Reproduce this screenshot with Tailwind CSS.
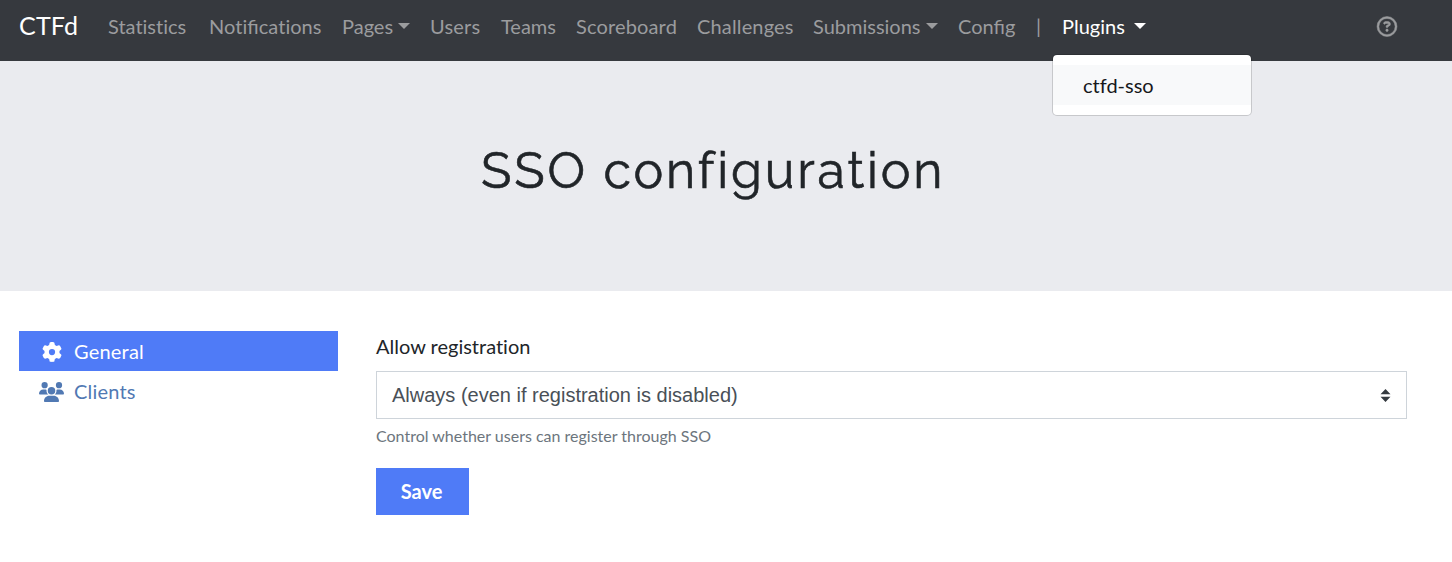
<!DOCTYPE html>
<html lang="en">
<head>
<meta charset="utf-8">
<title>SSO configuration</title>
<script src="https://cdn.jsdelivr.net/npm/@tailwindcss/browser@4"></script>
</head>
<body class="bg-white font-[Lato,sans-serif] text-xl leading-[30px] text-[#212529]">
<nav class="flex h-[61px] items-start bg-[#36393e] pl-[19px] pr-[55px] pt-2.5 text-[#9b9c9e]">
  <a class="w-[79px] text-[25px] tracking-[0.2px] text-white">CTFd</a>
  <ul class="flex h-8 items-center whitespace-nowrap">
    <li class="w-[101px] pl-2.5 [font-variant-ligatures:none]">Statistics</li>
    <li class="w-[133px] pl-2.5">No<span class="[font-variant-ligatures:none]">t</span>ifica<span class="[font-variant-ligatures:none]">t</span>ions</li>
    <li class="flex w-[88px] items-center gap-[5px] pl-2.5">Pages<span class="border-x-6 border-t-6 border-x-transparent border-t-current"></span></li>
    <li class="w-[71px] pl-2.5 tracking-[0.2px]">Users</li>
    <li class="w-[75px] pl-2.5">Teams</li>
    <li class="w-[121px] pl-2.5 tracking-[0.15px]">Scoreboard</li>
    <li class="w-[116px] pl-2.5 tracking-[0.15px]">Challenges</li>
    <li class="flex w-[145px] items-center gap-[5px] pl-2.5">Submissions<span class="border-x-6 border-t-6 border-x-transparent border-t-current"></span></li>
    <li class="w-[78px] pl-2.5">Config</li>
    <li class="w-[26px] pl-2.5">|</li>
    <li class="relative flex w-[103px] items-center gap-[9px] pl-2.5 text-white">Plugins<span class="border-x-6 border-t-6 border-x-transparent border-t-current"></span>
      <div class="absolute left-0 top-[43px] w-[200px] rounded-[5px] border border-black/15 bg-white bg-clip-padding py-2.5 text-[#16181b]">
        <a class="block h-10 bg-[#f8f9fa] pl-[30px] pt-[5px] [font-variant-ligatures:none]">ctfd-sso</a>
      </div>
    </li>
  </ul>
  <svg class="ml-auto mt-1.5 h-[21px] w-[20px] overflow-visible" viewBox="0 0 512 512" fill="currentColor" stroke="currentColor" stroke-width="12"><path d="M464 256A208 208 0 1 0 48 256a208 208 0 1 0 416 0zM0 256a256 256 0 1 1 512 0A256 256 0 1 1 0 256zm169.8-90.7c7.9-22.3 29.1-37.3 52.8-37.3h58.3c34.9 0 63.1 28.3 63.1 63.1c0 22.6-12.1 43.5-31.7 54.8L280 264.4c-.2 13-10.9 23.6-24 23.6c-13.3 0-24-10.7-24-24V250.5c0-8.6 4.6-16.5 12.1-20.8l44.3-25.4c4.7-2.7 7.6-7.7 7.6-13.1c0-8.4-6.8-15.1-15.1-15.1H222.6c-3.4 0-6.4 2.1-7.5 5.3l-.4 1.2c-4.4 12.5-18.2 19-30.6 14.6s-19-18.2-14.6-30.6l.4-1.2zM224 352a32 32 0 1 1 64 0 32 32 0 1 1 -64 0z"/></svg>
</nav>
<header class="h-[230px] bg-[#eaebef] pl-[481px] pt-20">
  <h1 class="whitespace-nowrap font-[Raleway,Lato,sans-serif] text-[50px] leading-[60px] tracking-[2.85px] [-webkit-text-stroke:0.6px_#212529]">SSO configuration</h1>
</header>
<main class="flex gap-[38px] pl-[19px] pr-[45px] pt-10">
  <aside class="w-[319px]">
    <a class="flex h-10 items-center bg-[#4f7bf7] pl-5 text-white"><svg class="mx-[3px] mt-px size-5" viewBox="0 0 512 512" fill="currentColor"><path d="M495.9 166.6c3.2 8.7 .5 18.4-6.4 24.6l-43.3 39.4c1.1 8.3 1.7 16.8 1.7 25.4s-.6 17.1-1.7 25.4l43.3 39.4c6.9 6.2 9.6 15.9 6.4 24.6c-4.4 11.9-9.7 23.3-15.8 34.3l-4.7 8.1c-6.6 11-14 21.4-22.1 31.2c-5.9 7.2-15.7 9.6-24.5 6.8l-55.7-17.7c-13.4 10.3-28.2 18.9-44 25.4l-12.5 57.1c-2 9.1-9 16.3-18.2 17.8c-13.8 2.3-28 3.5-42.5 3.5s-28.7-1.2-42.5-3.5c-9.2-1.5-16.2-8.7-18.2-17.8l-12.5-57.1c-15.8-6.5-30.6-15.1-44-25.4L83.1 425.9c-8.8 2.8-18.6 .3-24.5-6.8c-8.1-9.8-15.5-20.2-22.1-31.2l-4.7-8.1c-6.1-11-11.4-22.4-15.8-34.3c-3.2-8.7-.5-18.4 6.4-24.6l43.3-39.4C64.6 273.1 64 264.6 64 256s.6-17.1 1.7-25.4L22.4 191.2c-6.9-6.2-9.6-15.9-6.4-24.6c4.4-11.9 9.7-23.3 15.8-34.3l4.7-8.1c6.6-11 14-21.4 22.1-31.2c5.9-7.2 15.7-9.6 24.5-6.8l55.7 17.7c13.4-10.3 28.2-18.9 44-25.4l12.5-57.1c2-9.1 9-16.3 18.2-17.8C227.3 1.2 241.5 0 256 0s28.7 1.2 42.5 3.5c9.2 1.5 16.2 8.7 18.2 17.8l12.5 57.1c15.8 6.5 30.6 15.1 44 25.4l55.7-17.7c8.8-2.8 18.6-.3 24.5 6.8c8.1 9.8 15.5 20.2 22.1 31.2l4.7 8.1c6.1 11 11.4 22.4 15.8 34.3zM256 336a80 80 0 1 0 0-160 80 80 0 1 0 0 160z"/></svg><span class="ml-[9px] pb-px tracking-[0.2px]">General</span></a>
    <a class="flex h-10 items-center pl-5 text-[#5179b3]"><svg class="mr-[3px] mt-px h-5 w-[25px]" viewBox="0 0 640 512" fill="currentColor"><path d="M144 0a80 80 0 1 1 0 160A80 80 0 1 1 144 0zM512 0a80 80 0 1 1 0 160A80 80 0 1 1 512 0zM0 298.7C0 239.8 47.8 192 106.7 192h42.7c15.9 0 31 3.5 44.6 9.7c-1.3 7.2-1.9 14.7-1.9 22.3c0 38.2 16.8 72.5 43.3 96c-.2 0-.4 0-.7 0H21.3C9.6 320 0 310.4 0 298.7zM405.3 320c-.2 0-.4 0-.7 0c26.6-23.5 43.3-57.8 43.3-96c0-7.6-.7-15-1.9-22.3c13.6-6.3 28.7-9.7 44.6-9.7h42.7C592.2 192 640 239.8 640 298.7c0 11.8-9.6 21.3-21.3 21.3H405.3zM224 224a96 96 0 1 1 192 0 96 96 0 1 1 -192 0zM128 485.3C128 411.7 187.7 352 261.3 352H378.7C452.3 352 512 411.7 512 485.3c0 14.7-11.9 26.7-26.7 26.7H154.7c-14.7 0-26.7-11.9-26.7-26.7z"/></svg><span class="ml-[7px] pb-px tracking-[0.2px]">Clients</span></a>
  </aside>
  <form class="flex-1">
    <label class="block h-10 [font-variant-ligatures:none]">Allow registration</label>
    <div class="flex h-12 items-center justify-between border border-[#ced4da] pl-[15px] pr-[15px] font-['Liberation_Sans',sans-serif] text-[#495057]">Always (even if registration is disabled)<svg class="h-[13px] w-[11px]" viewBox="0 0 11 13" fill="#343a40"><path d="M5.5 0L10.5 5.3H.5zM.5 7.7H10.5L5.5 13z"/></svg></div>
    <small class="mt-[5px] block text-base leading-6 text-[#6c757d]">Control whether users can register through SSO</small>
    <button type="button" class="mt-5 block h-[47px] w-[93px] bg-[#4f7bf7] pb-0.5 pr-0.5 text-xl font-bold text-white">Save</button>
  </form>
</main>
</body>
</html>
